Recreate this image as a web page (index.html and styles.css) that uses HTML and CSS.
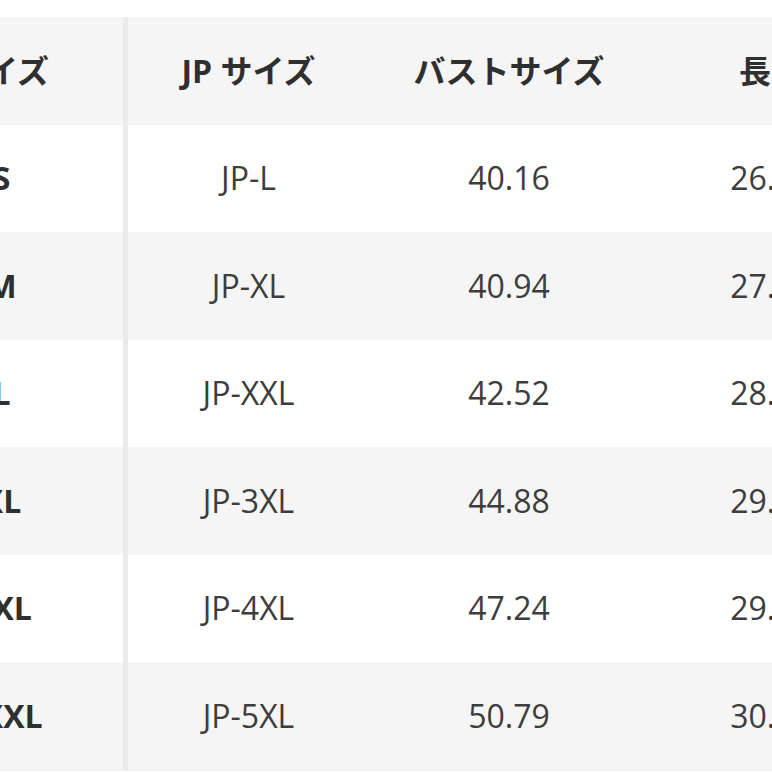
FILE: index.html
```html
<!DOCTYPE html>
<html lang="ja">
<head>
<meta charset="utf-8">
<title>サイズ表</title>
<link rel="stylesheet" href="styles.css">
</head>
<body>
<div class="viewport">
  <table class="size-table">
    <colgroup>
      <col class="c1"><col class="c2"><col class="c3"><col class="c4">
    </colgroup>
    <thead>
      <tr class="shade">
        <th class="first">サイズ</th>
        <th>JP サイズ</th>
        <th>バストサイズ</th>
        <th>長さ</th>
      </tr>
    </thead>
    <tbody>
      <tr><td class="first">S</td><td>JP-L</td><td>40.16</td><td>26.38</td></tr>
      <tr class="shade"><td class="first">M</td><td>JP-XL</td><td>40.94</td><td>27.17</td></tr>
      <tr><td class="first">L</td><td>JP-XXL</td><td>42.52</td><td>28.35</td></tr>
      <tr class="shade"><td class="first">XL</td><td>JP-3XL</td><td>44.88</td><td>29.13</td></tr>
      <tr><td class="first">XXL</td><td>JP-4XL</td><td>47.24</td><td>29.92</td></tr>
      <tr class="shade"><td class="first">XXXL</td><td>JP-5XL</td><td>50.79</td><td>30.71</td></tr>
    </tbody>
  </table>
</div>
</body>
</html>
```
FILE: styles.css
```css
* {
  box-sizing: border-box;
}
html, body {
  margin: 0;
  padding: 0;
  background: #ffffff;
}
body {
  font-family: "Open Sans", "Noto Sans CJK JP", sans-serif;
  color: #3d3d3d;
}
.viewport {
  width: 772px;
  height: 772px;
  overflow: hidden;
  padding-top: 17px;
}
.size-table {
  margin-left: -120px;
  border-collapse: separate;
  border-spacing: 0;
  table-layout: fixed;
  width: 1013px;
  border-bottom: 1px solid #ececec;
}
.c1 { width: 248px; }
.c2 { width: 241px; }
.c3 { width: 280px; }
.c4 { width: 244px; }
.size-table th,
.size-table td {
  height: 107.5px;
  padding: 0;
  text-align: center;
  vertical-align: middle;
  font-size: 32px;
  line-height: 1.2;
  white-space: nowrap;
}
.size-table th {
  font-weight: 700;
  color: #2f2f2f;
}
.size-table td {
  font-weight: 400;
}
.size-table .first {
  border-right: 5px solid #ebebeb;
  font-weight: 700;
  color: #2f2f2f;
}
.shade {
  background: #f5f5f5;
}
```
